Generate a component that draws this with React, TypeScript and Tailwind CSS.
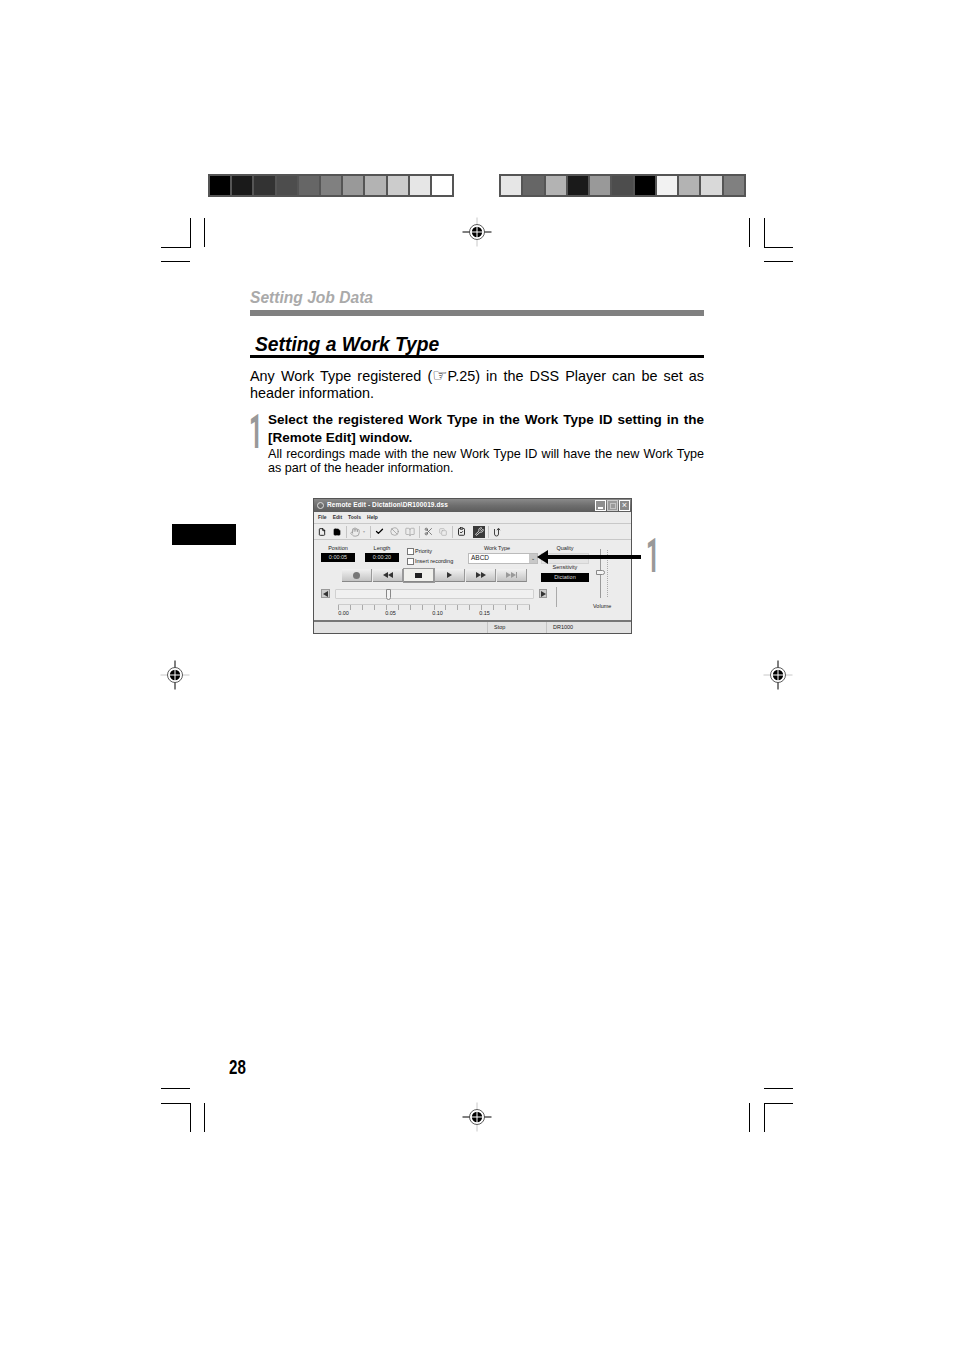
import React from 'react';
import { Ban, BookOpen, Check, ClipboardCheck, Copy, File, Hand, Save, Scissors, Wrench } from 'lucide-react';

const leftBar = ['#000000', '#1a1a1a', '#333333', '#4d4d4d', '#666666', '#808080', '#999999', '#b3b3b3', '#cccccc', '#e6e6e6', '#ffffff'];
const rightBar = ['#e6e6e6', '#666666', '#b3b3b3', '#1a1a1a', '#999999', '#4d4d4d', '#000000', '#f2f2f2', '#b3b3b3', '#d9d9d9', '#808080'];

function ColorBar({ colors, className }: { colors: string[]; className: string }) {
  return (
    <div className={`flex h-[23px] gap-[2px] bg-[#555555] p-[2px] ${className}`}>
      {colors.map((c, i) => (
        <div key={i} className="flex-1" style={{ backgroundColor: c }} />
      ))}
    </div>
  );
}

// registration mark, arms differ between the top/bottom and the side marks
function RegMark({ x, y, side }: { x: number; y: number; side?: boolean }) {
  const h = side ? '#c8c8c8' : '#000000';
  const v = side ? '#000000' : '#c8c8c8';
  return (
    <svg className="absolute" style={{ left: x - 15, top: y - 15 }} width="30" height="30" viewBox="0 0 30 30">
      <line x1="0.5" y1="15" x2="29.5" y2="15" stroke={h} strokeWidth="1" />
      <line x1="15" y1="0.5" x2="15" y2="29.5" stroke={v} strokeWidth="1" />
      <circle cx="15" cy="15" r="7.5" fill="white" stroke="#333333" strokeWidth="0.8" />
      <circle cx="15" cy="15" r="5.2" fill="black" />
      <line x1="9" y1="15" x2="21" y2="15" stroke="white" strokeWidth="1" />
      <line x1="15" y1="9" x2="15" y2="21" stroke="white" strokeWidth="1" />
    </svg>
  );
}

function CropLine({ x, y, w, h }: { x: number; y: number; w: number; h: number }) {
  return <div className="absolute bg-black" style={{ left: x, top: y, width: w, height: h }} />;
}

function TransportButton({ children, pressed }: { children: React.ReactNode; pressed?: boolean }) {
  return (
    <div className={`flex h-[13px] w-[30px] items-center justify-center border-b border-r border-b-[#888888] border-r-[#999999] ${pressed ? 'bg-[#f0f0ec] outline outline-1 outline-[#999999]' : 'bg-gradient-to-b from-[#f2f2f2] to-[#c4c4c4]'}`}>
      {children}
    </div>
  );
}

function Tri({ left, color = '#333333' }: { left?: boolean; color?: string }) {
  return (
    <span
      className={`h-0 w-0 border-y-[3px] border-y-transparent ${left ? 'border-r-[5px]' : 'border-l-[5px]'}`}
      style={left ? { borderRightColor: color } : { borderLeftColor: color }}
    />
  );
}

function Display({ text, className }: { text: string; className: string }) {
  return (
    <div className={`flex h-[9px] items-center justify-center bg-black text-[5.5px] text-[#dddddd] ${className}`}>{text}</div>
  );
}

function RemoteEditWindow() {
  const ticks = Array.from({ length: 17 });
  return (
    <div className="flex h-[136px] w-[319px] flex-col border border-[#555555] bg-[#ececec] font-['Liberation_Sans',sans-serif] text-[5.5px] leading-none text-[#222222]">
      {/* title bar */}
      <div className="flex h-[13px] items-center bg-gradient-to-b from-[#8a8a8a] via-[#6e6e6e] to-[#5c5c5c] pl-[3px] pr-[1px] text-white">
        <span className="mr-[3px] h-[7px] w-[7px] rounded-full border border-[#dddddd]" />
        <span className="whitespace-nowrap text-[6.5px] font-bold tracking-[0.1px]">Remote Edit - Dictation\DR100019.dss</span>
        <div className="ml-auto flex gap-[1px]">
          <div className="flex h-[11px] w-[11px] items-end justify-start border border-white bg-[#8f8f8f] p-[1.5px]">
            <span className="h-[2px] w-[5px] bg-white" />
          </div>
          <div className="flex h-[11px] w-[11px] items-center justify-center border border-[#cccccc] bg-[#9a9a9a]">
            <span className="h-[6px] w-[6px] border border-[#c4c4c4]" />
          </div>
          <div className="flex h-[11px] w-[11px] items-center justify-center border border-white bg-[#8a8a8a] text-[9px] text-white">×</div>
        </div>
      </div>
      {/* menu */}
      <div className="flex h-[11px] items-center gap-[6px] pl-[4px] text-[5px] font-bold text-[#333333]">
        <span>File</span>
        <span>Edit</span>
        <span>Tools</span>
        <span>Help</span>
      </div>
      {/* toolbar */}
      <div className="flex h-[17px] items-center border-y border-y-[#c8c8c8] pl-[4px]">
        <File size={8} className="text-black" strokeWidth={2.5} />
        <Save size={8} className="ml-[7px] fill-black text-black" strokeWidth={2} />
        <span className="ml-[5px] h-[12px] w-px bg-[#c4c4c4]" />
        <Hand size={10} className="ml-[3px] text-[#999999]" />
        <span className="ml-[3px] mr-[5px] text-[4px] text-[#aaaaaa]">▾</span>
        <span className="h-[12px] w-px bg-[#c4c4c4]" />
        <Check size={9} className="ml-[4px] text-black" strokeWidth={3.5} />
        <Ban size={9} className="ml-[6px] text-[#999999]" />
        <BookOpen size={10} className="ml-[6px] text-[#aaaaaa]" />
        <span className="ml-[4px] h-[12px] w-px bg-[#c4c4c4]" />
        <Scissors size={9} className="ml-[4px] text-[#555555]" />
        <Copy size={8} className="ml-[6px] text-[#aaaaaa]" />
        <span className="ml-[5px] h-[12px] w-px bg-[#c4c4c4]" />
        <ClipboardCheck size={9} className="ml-[4px] text-[#222222]" strokeWidth={2.5} />
        <div className="ml-[7px] flex h-[12px] w-[12px] items-center justify-center bg-[#3a3a3a]">
          <Wrench size={9} className="text-white" />
        </div>
        <span className="ml-[3px] h-[12px] w-px bg-[#c4c4c4]" />
        <svg className="ml-[4px]" width="8" height="10" viewBox="0 0 8 10" fill="none" stroke="#444444" strokeWidth="1">
          <path d="M1.5 2v5a2 2 0 0 0 4 0V1.5" />
          <path d="M4 3.2 5.5 1.2 7 3.2" />
        </svg>
      </div>
      {/* main panel */}
      <div className="flex flex-1 pl-[7px] pt-[6px]">
        <div className="w-[269px]">
          <div className="flex">
            <div className="w-[220px]">
              <div className="flex">
                <div className="w-[34px] text-center">
                  <div className="mb-[1px] h-[6px]">Position</div>
                  <Display text="0:00:05" className="w-[34px]" />
                </div>
                <div className="ml-[10px] w-[34px] text-center">
                  <div className="mb-[1px] h-[6px]">Length</div>
                  <Display text="0:00:20" className="w-[34px]" />
                </div>
                <div className="ml-[8px] flex w-[48px] flex-col gap-[3px] pt-[2px]">
                  <div className="flex items-center gap-[1px]">
                    <span className="h-[7px] w-[7px] shrink-0 border border-[#777777] bg-white" />
                    <span className="whitespace-nowrap">Priority</span>
                  </div>
                  <div className="flex items-center gap-[1px]">
                    <span className="h-[7px] w-[7px] shrink-0 border border-[#777777] bg-white" />
                    <span className="whitespace-nowrap">Insert recording</span>
                  </div>
                </div>
                <div className="ml-[13px] w-[70px] text-center">
                  <div className="mb-[1px] h-[6px] pr-[12px]">Work Type</div>
                  <div className="flex h-[11px] w-[70px] items-center justify-between border border-[#bbbbbb] bg-white pl-[2px] text-[6.5px]">
                    <span>ABCD</span>
                    <span className="flex h-[9px] w-[8px] items-center justify-center bg-[#c8c8c8] text-[5px]">⌄</span>
                  </div>
                </div>
              </div>
              <div className="ml-[21px] mt-[4px] flex gap-px">
                <TransportButton>
                  <span className="h-[7px] w-[7px] rounded-full bg-[#777777]" />
                </TransportButton>
                <TransportButton>
                  <Tri left />
                  <Tri left />
                </TransportButton>
                <TransportButton pressed>
                  <span className="h-[5px] w-[7px] bg-[#222222]" />
                </TransportButton>
                <TransportButton>
                  <Tri />
                </TransportButton>
                <TransportButton>
                  <Tri />
                  <Tri />
                </TransportButton>
                <TransportButton>
                  <Tri color="#999999" />
                  <Tri color="#999999" />
                  <span className="h-[6px] w-px bg-[#999999]" />
                </TransportButton>
              </div>
            </div>
            <div className="w-[48px] text-center">
              <div className="mb-[1px] h-[6px]">Quality</div>
              <div className="h-[11px] w-[48px] border border-[#d4d4d4] bg-[#e4e4e4]" />
              <div className="mb-[2px] mt-[1px] h-[6px]">Sensitivity</div>
              <Display text="Dictation" className="w-[48px]" />
            </div>
          </div>
          {/* position slider */}
          <div className="mt-[7px] flex items-start">
            <div className="flex h-[9px] w-[9px] items-center justify-center border border-[#999999] bg-[#cccccc]">
              <Tri left />
            </div>
            <div className="relative ml-[5px] h-[10px] w-[199px] rounded-[1px] border border-[#d0d0d0] bg-[#f0f0f0]">
              <span className="absolute left-[50px] top-[-1px] h-[11px] w-[5px] rounded-b-[3px] border border-[#888888] bg-[#f4f4f4]" />
            </div>
            <div className="ml-[5px] flex h-[9px] w-[8px] items-center justify-center border border-[#999999] bg-[#cccccc]">
              <Tri />
            </div>
            <div className="-mt-[2px] ml-[9px] h-[20px] w-[3px] border-l border-[#aaaaaa]" />
          </div>
          {/* ruler */}
          <div className="-mt-[3px] ml-[17px] w-[192px]">
            <div className="flex h-[6px] items-start justify-between border-t border-[#cccccc]">
              {ticks.map((_, i) => (
                <span key={i} className="h-[5px] w-px bg-[#aaaaaa]" />
              ))}
            </div>
            <div className="ml-[-18px] mt-[1px] flex">
              <span className="w-[47px] text-center">0.00</span>
              <span className="w-[47px] text-center">0.05</span>
              <span className="w-[47px] text-center">0.10</span>
              <span className="w-[47px] text-center">0.15</span>
            </div>
          </div>
        </div>
        {/* volume */}
        <div className="w-[30px] pt-[3px]">
          <div className="relative ml-[10px] h-[49px] w-px bg-[#999999]">
            <span className="absolute left-[-4px] top-[21px] h-[5px] w-[9px] rounded-r-[3px] border border-[#888888] bg-[#f4f4f4]" />
            <span className="absolute left-[7px] top-[1px] h-[47px] border-l border-dotted border-[#aaaaaa]" />
          </div>
          <div className="ml-[3px] mt-[6px]">Volume</div>
        </div>
      </div>
      {/* status bar */}
      <div className="flex h-[13px] items-stretch border-t-2 border-t-[#777777] bg-[#e2e2e2]">
        <span className="ml-[173px] flex w-[59px] items-center border-l border-[#c4c4c4] pl-[6px]">Stop</span>
        <span className="flex items-center border-l border-[#c4c4c4] pl-[6px]">DR1000</span>
      </div>
    </div>
  );
}

export default function App() {
  return (
    <div className="relative h-[1351px] w-[954px] overflow-hidden bg-white font-['Liberation_Sans',sans-serif] text-black">
      {/* printer's marks */}
      <div className="absolute left-[208px] top-[174px]">
        <ColorBar colors={leftBar} className="w-[246px]" />
      </div>
      <div className="absolute left-[499px] top-[174px]">
        <ColorBar colors={rightBar} className="w-[247px]" />
      </div>
      <CropLine x={190} y={218} w={1} h={29} />
      <CropLine x={161} y={247} w={30} h={1} />
      <CropLine x={204} y={218} w={1} h={29} />
      <CropLine x={161} y={261} w={29} h={1} />
      <CropLine x={749} y={218} w={1} h={29} />
      <CropLine x={764} y={218} w={1} h={29} />
      <CropLine x={764} y={247} w={29} h={1} />
      <CropLine x={764} y={261} w={29} h={1} />
      <CropLine x={161} y={1088} w={29} h={1} />
      <CropLine x={161} y={1103} w={30} h={1} />
      <CropLine x={190} y={1103} w={1} h={29} />
      <CropLine x={204} y={1103} w={1} h={29} />
      <CropLine x={749} y={1103} w={1} h={29} />
      <CropLine x={764} y={1103} w={1} h={29} />
      <CropLine x={764} y={1103} w={29} h={1} />
      <CropLine x={764} y={1088} w={29} h={1} />
      <RegMark x={477} y={232} />
      <RegMark x={477} y={1117} />
      <RegMark x={175} y={675} side />
      <RegMark x={778} y={675} side />

      {/* side tab */}
      <div className="absolute left-[172px] top-[524px] h-[21px] w-[64px] bg-black" />

      {/* page column */}
      <div className="ml-[250px] w-[454px] pt-[288px]">
        <div className="h-[19px] text-[15.6px] font-bold italic leading-[19px] text-[#aaaaaa]">Setting Job Data</div>
        <div className="mt-[3px] h-[6px] bg-[#808080]" />
        <h1 className="mt-[18px] border-b-[3px] border-black pl-[5px] text-[19.3px] font-bold italic leading-[21px]">Setting a Work Type</h1>
        <p className="mt-[9px] text-justify text-[14.4px] leading-[17px]">
          Any Work Type registered (<span className="font-['DejaVu_Sans',sans-serif] text-[17px] leading-none">☞</span>P.25) in the DSS Player can be set as header information.
        </p>
        <div className="mt-[9px] flex">
          <div className="relative w-[18px] shrink-0">
            <span className="absolute left-[-1px] top-[-4px] origin-left scale-x-[0.48] font-['Roboto',sans-serif] text-[49px] font-bold leading-[49px] text-[#999999]">1</span>
          </div>
          <div>
            <p className="text-justify text-[13.5px] font-bold leading-[18px]">
              Select the registered Work Type in the Work Type ID setting in the [Remote Edit] window.
            </p>
            <p className="text-justify text-[12.6px] leading-[14px]">
              All recordings made with the new Work Type ID will have the new Work Type as part of the header information.
            </p>
          </div>
        </div>
        <div className="relative ml-[63px] mt-[23px] w-[319px]">
          <RemoteEditWindow />
          {/* callout arrow */}
          <div className="absolute left-[224px] top-[52px] flex items-center">
            <span className="h-0 w-0 border-y-[7px] border-r-[11px] border-y-transparent border-r-black" />
            <span className="h-[4px] w-[93px] bg-black" />
          </div>
          <span className="absolute left-[333px] top-[33px] origin-left scale-x-[0.48] font-['Roboto',sans-serif] text-[49px] font-bold leading-[49px] text-[#999999]">1</span>
        </div>
        <div className="ml-[-21px] mt-[421px] origin-left scale-x-[0.72] text-[21px] font-bold leading-[24px]">28</div>
      </div>
    </div>
  );
}
